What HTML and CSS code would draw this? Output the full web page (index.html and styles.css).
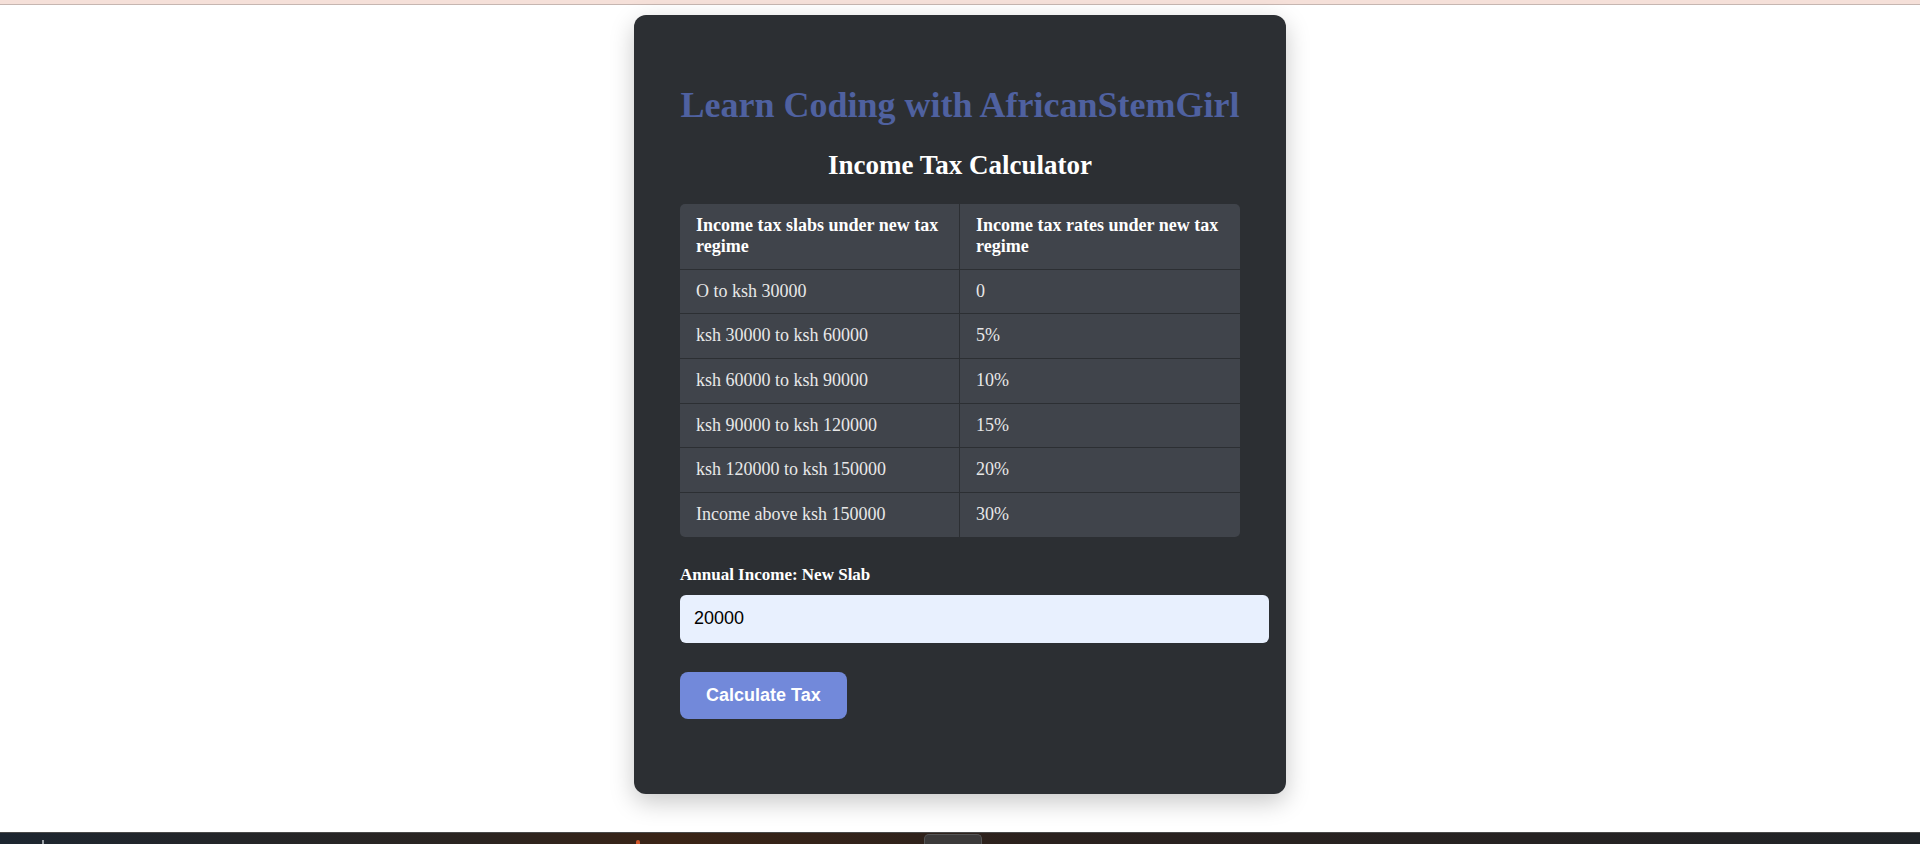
FILE: index.html
```html
<!DOCTYPE html>
<html lang="en">
<head>
<meta charset="utf-8">
<title>Income Tax Calculator</title>
<link rel="stylesheet" href="styles.css">
</head>
<body>
<div class="topband"></div>
<main class="page">
  <section class="card">
    <h1 class="brand">Learn Coding with AfricanStemGirl</h1>
    <h2 class="subtitle">Income Tax Calculator</h2>
    <table class="slabs">
      <thead>
        <tr><th>Income tax slabs under new tax regime</th><th>Income tax rates under new tax regime</th></tr>
      </thead>
      <tbody>
        <tr><td>O to ksh 30000</td><td>0</td></tr>
        <tr><td>ksh 30000 to ksh 60000</td><td>5%</td></tr>
        <tr><td>ksh 60000 to ksh 90000</td><td>10%</td></tr>
        <tr><td>ksh 90000 to ksh 120000</td><td>15%</td></tr>
        <tr><td>ksh 120000 to ksh 150000</td><td>20%</td></tr>
        <tr><td>Income above ksh 150000</td><td>30%</td></tr>
      </tbody>
    </table>
    <label class="field-label" for="income">Annual Income: New Slab</label>
    <input class="field" id="income" type="text" value="20000">
    <button class="calc" type="button">Calculate Tax</button>
  </section>
</main>
<div class="taskbar">
  <span class="tb-mark"></span>
  <span class="tb-dot"></span>
  <span class="tb-app"></span>
</div>
</body>
</html>
```
FILE: styles.css
```css
html, body {
  margin: 0;
  padding: 0;
}
body {
  height: 844px;
  display: flex;
  flex-direction: column;
  background: #ffffff;
  font-family: "Liberation Serif", "Times New Roman", serif;
  overflow: hidden;
}
.topband {
  height: 4px;
  background: #f5e0d9;
  border-bottom: 1px solid #c6b6b1;
  flex: none;
}
.page {
  flex: 1;
  display: flex;
  justify-content: center;
  align-items: flex-start;
  min-height: 0;
}
.card {
  margin-top: 10px;
  width: 560px;
  padding: 45px 46px 75px;
  background: #2c2f33;
  border-radius: 12px;
  box-shadow: 0 8px 24px rgba(0, 0, 0, 0.22);
}
.brand {
  margin: 24px 0;
  font-size: 36px;
  font-weight: bold;
  text-align: center;
  color: #4f61a0;
}
.subtitle {
  margin: 0 0 23px;
  font-size: 27px;
  font-weight: bold;
  text-align: center;
  color: #ffffff;
}
.slabs {
  width: 560px;
  table-layout: fixed;
  border-collapse: separate;
  border-spacing: 0;
  background: #40444b;
  border-radius: 5px;
  overflow: hidden;
  font-size: 18px;
}
.slabs th, .slabs td {
  padding: 11px 16px 11.7px;
  text-align: left;
  vertical-align: top;
  border-bottom: 1px solid #2c2f33;
  line-height: 21px;
}
.slabs th:first-child, .slabs td:first-child {
  border-right: 1px solid #2c2f33;
}
.slabs tbody tr:last-child td {
  border-bottom: none;
}
.slabs th {
  color: #ffffff;
  font-weight: bold;
}
.slabs td {
  color: #e8e8e8;
  font-weight: normal;
}
.field-label {
  display: block;
  margin-top: 28px;
  font-size: 17px;
  font-weight: bold;
  color: #ffffff;
  line-height: 20px;
}
.field {
  display: block;
  box-sizing: border-box;
  margin-top: 10px;
  width: 589px;
  height: 48px;
  padding: 0 14px;
  border: none;
  border-radius: 6px;
  background: #e8f0fe;
  color: #000000;
  font-family: "Liberation Sans", Arial, sans-serif;
  font-size: 18px;
  outline: none;
}
.calc {
  display: block;
  margin-top: 29px;
  height: 47px;
  padding: 0 26px;
  border: none;
  border-radius: 8px;
  background: #7289da;
  color: #ffffff;
  font-family: "Liberation Sans", Arial, sans-serif;
  font-size: 18px;
  font-weight: bold;
}
.taskbar {
  flex: none;
  height: 11px;
  border-top: 1px solid #4a4a4a;
  background: linear-gradient(90deg, #1d2630 0%, #2b2420 25%, #3a2416 35%, #2a211e 55%, #262222 80%, #202428 100%);
  display: flex;
  align-items: flex-end;
}
.tb-mark {
  margin-left: 42px;
  width: 2px;
  height: 4px;
  background: #9aa0a6;
}
.tb-dot {
  margin-left: 592px;
  width: 4px;
  height: 4px;
  border-radius: 2px 2px 0 0;
  background: #d0562a;
}
.tb-app {
  margin-left: 284px;
  width: 56px;
  height: 9px;
  border-radius: 5px 5px 0 0;
  background: #3c3a3a;
  border: 1px solid #555;
  border-bottom: none;
}
```
